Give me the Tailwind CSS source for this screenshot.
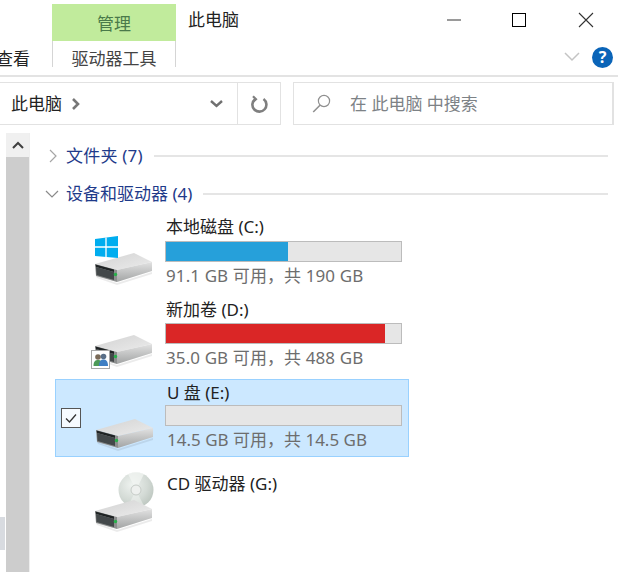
<!DOCTYPE html>
<html lang="zh-CN">
<head>
    <meta charset="UTF-8">
    <title>此电脑</title>
    <script src="https://cdn.jsdelivr.net/npm/@tailwindcss/browser@4"></script>
</head>
<body class="bg-white w-[618px] h-[572px] overflow-hidden font-['Noto_Sans','Noto_Sans_CJK_SC',sans-serif] text-[17px] text-[#222]">
    <svg class="absolute w-0 h-0">
        <defs>
            <linearGradient id="driveTop" x1="0" y1="0" x2="1" y2="1">
                <stop offset="0" stop-color="#d2d2d2"/>
                <stop offset="1" stop-color="#ececec"/>
            </linearGradient>
            <linearGradient id="driveSide" x1="0" y1="0" x2="0" y2="1">
                <stop offset="0" stop-color="#e2e2e2"/>
                <stop offset="1" stop-color="#a2a4a4"/>
            </linearGradient>
            <radialGradient id="discFill" cx="0.38" cy="0.35" r="0.75">
                <stop offset="0" stop-color="#eef2ef"/>
                <stop offset="0.6" stop-color="#d3dad5"/>
                <stop offset="1" stop-color="#b9c3bc"/>
            </radialGradient>
        </defs>
        <symbol id="drive" viewBox="0 0 58 32">
            <polygon points="1,23 22,30 57,19 57,21 22,32 2,25" fill="#000" opacity="0.08"/>
            <polygon points="0,11 39,0 57,9 22,17" fill="url(#driveTop)"/>
            <polygon points="22,17 57,9 57,18 22,29" fill="url(#driveSide)"/>
            <polygon points="0,11 22,17 22,29 1,23" fill="#8c8e8e"/>
            <polygon points="0.500,11.500 19,16.500 19,19 1,14" fill="#1f2324"/>
            <polygon points="1,14 19,19 19,27 1.500,22" fill="#43484a"/>
            <circle cx="20.500" cy="21.500" r="1.700" fill="#27b04a"/>
        </symbol>
    </svg>

    <!-- ribbon -->
    <header class="h-[77px] border-b-2 border-[#e3e3e3] flex">
        <div class="w-[52px] overflow-hidden flex justify-end items-end pb-1">
            <span class="whitespace-nowrap pr-[22px] leading-6">查看</span>
        </div>
        <div class="w-[124px] pt-1 flex flex-col">
            <div class="h-[37px] pt-[2px] bg-[#c1eb9c] flex items-center justify-center text-[#4a7a4a]">管理</div>
            <div class="h-[26px] border-x border-[#d5d5d5] overflow-hidden pt-[6px] leading-6 text-center text-[#444]">驱动器工具</div>
        </div>
        <div class="flex-1 flex flex-col">
            <div class="flex items-center h-[40px]">
                <span class="ml-3">此电脑</span>
                <div class="ml-auto flex items-center">
                    <div class="w-[14px] h-[2px] bg-[#9a9a9a] mr-[51px]"></div>
                    <div class="w-[14px] h-[14px] border border-black mr-[52px]"></div>
                    <svg class="w-4 h-4 mr-[24px]" viewBox="0 0 16 16" fill="none" stroke="#333" stroke-width="1.1"><path d="M1 1l14 14M15 1L1 15"/></svg>
                </div>
            </div>
            <div class="flex items-center justify-end h-[36px] pr-[5px]">
                <svg class="w-4 h-[10px] mr-[12px]" viewBox="0 0 16 10" fill="none" stroke="#c4c4c4" stroke-width="1.5"><path d="M1 1l7 7 7-7"/></svg>
                <div class="w-[21px] h-[21px] rounded-full bg-[#0a64b8] text-white text-[16px] font-bold flex items-center justify-center leading-none">?</div>
            </div>
        </div>
    </header>

    <!-- address bar -->
    <nav class="flex h-[43px] mt-[5px]">
        <div class="w-[281px] border-y border-r border-[#e2e2e2] flex items-center pl-[11px]">
            <span>此电脑</span>
            <svg class="w-2 h-3 ml-[10px]" viewBox="0 0 8 12" fill="none" stroke="#777" stroke-width="2.600"><path d="M1 1l5 5-5 5"/></svg>
            <svg class="w-[13px] h-2 ml-auto mr-[14px]" viewBox="0 0 13 8" fill="none" stroke="#707070" stroke-width="2.400"><path d="M1 1l5.500 5 5.500-5"/></svg>
            <div class="w-[43px] h-full border-l border-[#e2e2e2] flex items-center justify-center">
                <svg class="w-[18px] h-[18px]" viewBox="0 0 18 18" fill="none" stroke="#7f7f7f" stroke-width="2.600"><path d="M5 4.200A7 7 0 1 0 13.500 4"/><path d="M3 1.200 6 4.200 3 7" stroke-width="2.200"/></svg>
            </div>
        </div>
        <div class="w-[321px] ml-3 border border-r-2 border-[#e2e2e2] flex items-center pl-[18px]">
            <svg class="w-[19px] h-[19px]" viewBox="0 0 19 19" fill="none" stroke="#8f8f8f" stroke-width="1.2"><circle cx="12" cy="7" r="5.600"/><path d="M8 11.200 1.200 18" stroke-width="1.500"/></svg>
            <span class="ml-[19px] text-[#7d8286]">在 此电脑 中搜索</span>
        </div>
    </nav>

    <main class="flex h-[448px]">
        <!-- nav pane edge + scrollbar -->
        <div class="w-[6px] flex flex-col justify-end pb-[23px]">
            <div class="w-[5px] h-[33px] bg-[#d8dbe0]"></div>
        </div>
        <div class="w-[24px] mt-2 flex flex-col border-r border-[#eeeeee]">
            <div class="h-[24px] bg-[#f0f0f0] flex items-center justify-center">
                <svg class="w-3 h-2" viewBox="0 0 12 8" fill="none" stroke="#404040" stroke-width="2"><path d="M1 7l5-5 5 5"/></svg>
            </div>
            <div class="flex-1 bg-[#cdcdcd]"></div>
        </div>

        <section class="flex-1 min-w-0">
            <div class="flex items-center h-6 mt-[19px] pl-[18px] pr-[10px]">
                <svg class="w-[10px] h-[14px]" viewBox="0 0 10 14" fill="none" stroke="#a6a6a6" stroke-width="1.200"><path d="M2 1l6 6-6 6"/></svg>
                <span class="ml-2 text-[#1e3a8a] tracking-[0.2px]">文件夹 (7)</span>
                <div class="flex-1 h-[2px] bg-[#e5e5e5] ml-[11px]"></div>
            </div>
            <div class="flex items-center h-6 mt-[14px] pl-[15px] pr-[10px]">
                <svg class="w-[14px] h-[10px]" viewBox="0 0 14 10" fill="none" stroke="#8a8a8a" stroke-width="1.200"><path d="M1 2l6 6 6-6"/></svg>
                <span class="ml-[7px] text-[#1e3a8a]">设备和驱动器 (4)</span>
                <div class="flex-1 h-[2px] bg-[#e5e5e5] ml-[11px]"></div>
            </div>

            <div class="ml-[25px] w-[354px] mt-[9px] flex flex-col gap-1">
                <!-- C: -->
                <div class="h-[78px] border border-transparent flex pl-[35px]">
                    <svg class="w-[70px] h-[76px] shrink-0" viewBox="0 0 70 76">
                        <use href="#drive" x="4" y="37" width="58" height="32"/>
                        <polygon points="4,23 27,20 27,42 4,40" fill="#00adef"/>
                        <path d="M15 21.500v20M4 31h23" stroke="#fff" stroke-width="1.300"/>
                    </svg>
                    <div class="ml-1 w-[237px]">
                        <div class="h-[25px] pl-px leading-[21px]">本地磁盘 (C:)</div>
                        <div class="h-[21px] border border-[#bcbcbc] bg-[#e6e6e6]">
                            <div class="h-full bg-[#26a0da]" style="width: 52%"></div>
                        </div>
                        <div class="pl-px mt-[2px] text-[#6d6d6d] leading-6 whitespace-nowrap tracking-[0.1px]">91.1 GB 可用，共 190 GB</div>
                    </div>
                </div>
                <!-- D: -->
                <div class="h-[78px] border border-transparent flex pl-[35px]">
                    <svg class="w-[70px] h-[76px] shrink-0" viewBox="0 0 70 76">
                        <use href="#drive" x="4" y="37" width="58" height="32"/>
                        <rect x="0.500" y="52.500" width="18" height="18" fill="#fff" stroke="#a8a8a8"/>
                        <circle cx="7" cy="59" r="2.800" fill="#7a6a58"/>
                        <path d="M2.500 68c0-5 2-6 4.500-6s4.500 1 4.500 6z" fill="#4d9a58"/>
                        <circle cx="12.500" cy="58.500" r="2.800" fill="#5a6f88"/>
                        <path d="M8 68c0-5 2-6.500 4.500-6.500s4.500 1.500 4.500 6.500z" fill="#3f7fc4"/>
                    </svg>
                    <div class="ml-1 w-[237px]">
                        <div class="h-[25px] pl-px leading-[23px]">新加卷 (D:)</div>
                        <div class="h-[21px] border border-[#bcbcbc] bg-[#e6e6e6]">
                            <div class="h-full bg-[#da2626]" style="width: 93%"></div>
                        </div>
                        <div class="pl-px mt-[2px] text-[#6d6d6d] leading-6 whitespace-nowrap tracking-[0.1px]">35.0 GB 可用，共 488 GB</div>
                    </div>
                </div>
                <!-- E: selected -->
                <div class="relative h-[78px] border border-[#99d1ff] bg-[#cce8ff] flex pl-[35px]">
                    <div class="absolute left-[5px] top-[28px] w-5 h-5 border border-[#555] bg-white/80 flex items-center justify-center">
                        <svg class="w-[14px] h-[14px]" viewBox="0 0 14 14" fill="none" stroke="#333" stroke-width="1.300"><path d="M2 7.500l3.500 3.500L12 3.500"/></svg>
                    </div>
                    <svg class="w-[70px] h-[76px] shrink-0" viewBox="0 0 70 76">
                        <use href="#drive" x="5" y="39" width="58" height="32"/>
                    </svg>
                    <div class="ml-1 w-[237px]">
                        <div class="h-[25px] pl-[2px] leading-[25px]">U 盘 (E:)</div>
                        <div class="h-[21px] border border-[#bcbcbc] bg-[#e6e6e6]"></div>
                        <div class="pl-[2px] mt-[2px] text-[#6d6d6d] leading-6 whitespace-nowrap">14.5 GB 可用，共 14.5 GB</div>
                    </div>
                </div>
                <!-- G: -->
                <div class="h-[78px] border border-transparent flex pl-[35px]">
                    <svg class="w-[70px] h-[76px] shrink-0" viewBox="0 0 70 76">
                        <circle cx="45" cy="28" r="17.500" fill="url(#discFill)"/>
                        <path d="M45 28 37 12A17.500 17.500 0 0 1 53 12z" fill="#f3f6f4" opacity="0.700"/>
                        <path d="M45 28 53 44A17.500 17.500 0 0 1 37 44z" fill="#f3f6f4" opacity="0.500"/>
                        <circle cx="45" cy="28" r="5" fill="#eef0ee" stroke="#c6cbc7"/>
                        <use href="#drive" x="4" y="38" width="58" height="32"/>
                    </svg>
                    <div class="ml-1 w-[237px]">
                        <div class="pt-[9px] pl-[2px] leading-[25px]">CD 驱动器 (G:)</div>
                    </div>
                </div>
            </div>
        </section>
    </main>
</body>
</html>
